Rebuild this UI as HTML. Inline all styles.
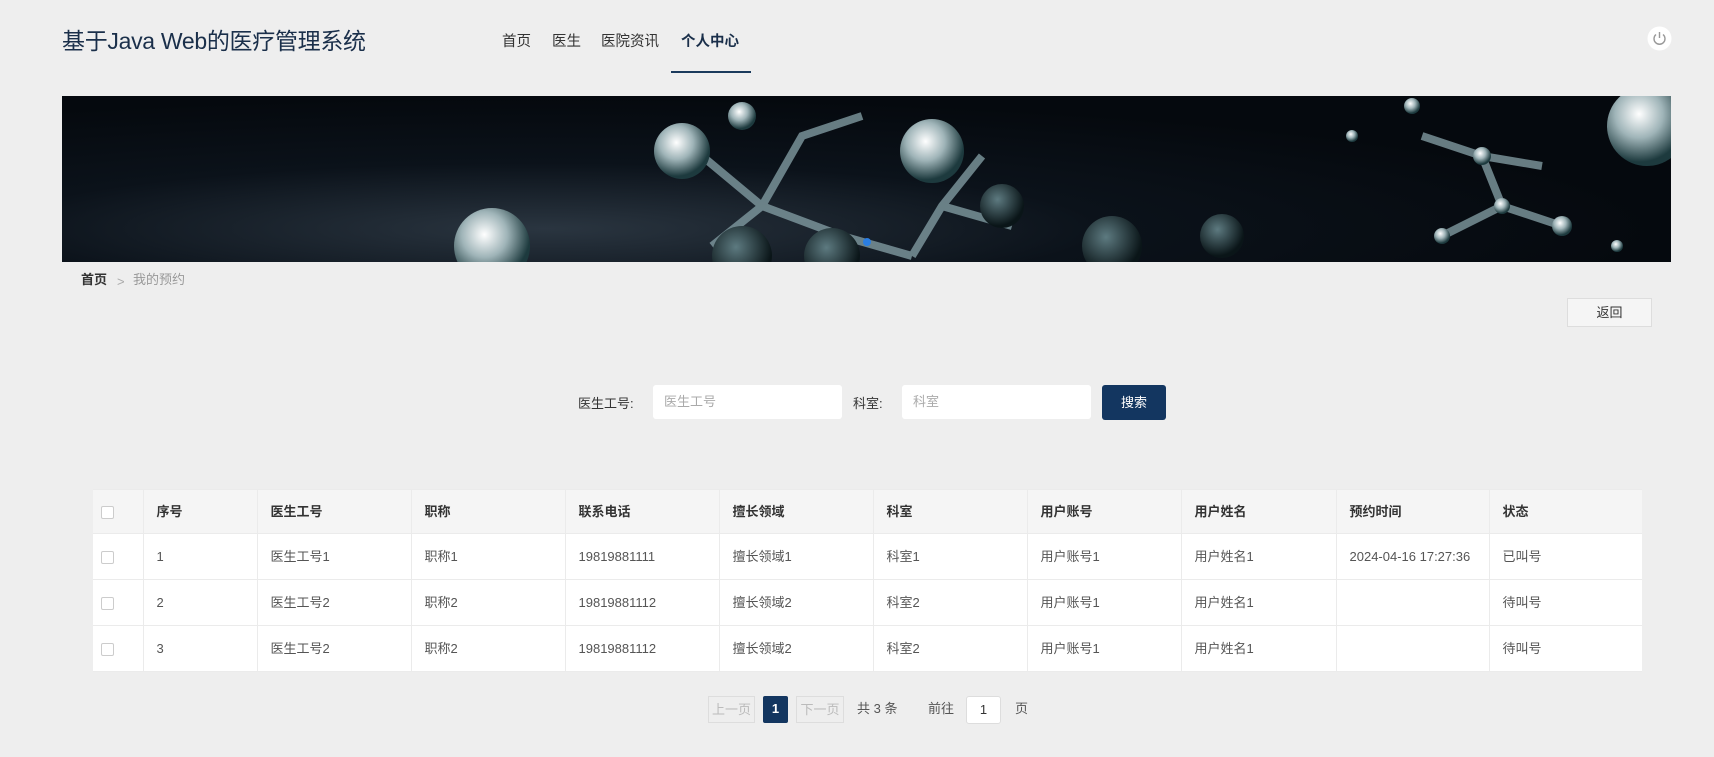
<!DOCTYPE html>
<html><head><meta charset="utf-8"><style>
*{margin:0;padding:0;box-sizing:border-box}
body{width:1714px;height:757px;background:#eeeeee;font-family:"Liberation Sans","Noto Sans CJK SC",sans-serif;position:relative;overflow:hidden;color:#333}
.a{position:absolute}
.title{left:62px;top:22px;font-size:23px;color:#1a2f4a;white-space:nowrap;letter-spacing:-0.3px}
.nav{top:30px;font-size:14.5px;color:#333;white-space:nowrap}
.banner{left:62px;top:96px;width:1609px;height:166px;overflow:hidden;background:radial-gradient(ellipse at 30% 80%,#2a3540 0%,#0b121a 35%,#05090e 70%),#05090e}
.crumb{top:271px;font-size:13px;line-height:17px}
.btn{background:#f5f5f5;border:1px solid #ddd;font-size:13px;text-align:center;color:#333}
.inp{background:#fff;border-radius:3px;font-size:13px;color:#aaa;padding-left:11px;line-height:34px}
table{position:absolute;left:93px;top:489px;width:1549px;border-collapse:collapse;font-size:13px;color:#555}
td,th{border:1px solid #ebebeb;text-align:left;padding-left:13px;font-weight:normal;line-height:16px;vertical-align:middle}
th{background:#f5f5f5;height:44px;color:#333;font-weight:bold}
td{background:#fff;height:46px}
table tr>*:first-child{padding-left:8px;border-left:none}
table tr>*:last-child{border-right:none}
.cb{display:inline-block;width:13px;height:13px;border:1px solid #ccc;border-radius:2px;background:#fff;vertical-align:middle}
.pg{top:696px;height:27px;font-size:13px;line-height:25px;text-align:center}
</style></head><body>
<div class="a title">基于Java Web的医疗管理系统</div>
<div class="a nav" style="left:502px">首页</div>
<div class="a nav" style="left:552px">医生</div>
<div class="a nav" style="left:601px">医院资讯</div>
<div class="a nav" style="left:681px;font-weight:bold;color:#1a2f4a">个人中心</div>
<div class="a" style="left:671px;top:71px;width:80px;height:2px;background:#1a3a5c"></div>
<svg class="a" style="left:1647px;top:26px" width="25" height="25" viewBox="0 0 25 25"><circle cx="12.5" cy="12.5" r="12" fill="#fff"/><path d="M9 8.5a5.5 5.5 0 1 0 7 0" fill="none" stroke="#999" stroke-width="1.4"/><path d="M12.5 6v6" stroke="#999" stroke-width="1.4"/></svg>
<div class="a banner">
<svg width="1609" height="166" viewBox="0 0 1609 166">
<defs><radialGradient id="g" cx="0.4" cy="0.35" r="0.6"><stop offset="0" stop-color="#fff"/><stop offset="0.5" stop-color="#9fb4b8"/><stop offset="1" stop-color="#1d3a3e"/></radialGradient>
<radialGradient id="d" cx="0.4" cy="0.35" r="0.6"><stop offset="0" stop-color="#5d7a80"/><stop offset="1" stop-color="#0a1518"/></radialGradient></defs>
<g stroke="#7f9aa0" stroke-width="8" fill="none" opacity="0.8">
<path d="M640 60 L700 110 L780 140 M700 110 L650 150 M700 110 L740 40 L800 20 M780 140 L850 160 M850 160 L880 110 L920 60 M880 110 L950 130"/>
<path d="M1360 40 L1420 60 L1480 70 M1420 60 L1440 110 L1500 130 M1440 110 L1380 140"/>
</g>
<circle cx="620" cy="55" r="28" fill="url(#g)"/>
<circle cx="870" cy="55" r="32" fill="url(#g)"/>
<circle cx="430" cy="150" r="38" fill="url(#g)"/>
<circle cx="680" cy="160" r="30" fill="url(#d)"/>
<circle cx="770" cy="160" r="28" fill="url(#d)"/>
<circle cx="940" cy="110" r="22" fill="url(#d)"/>
<circle cx="680" cy="20" r="14" fill="url(#g)"/>
<circle cx="1050" cy="150" r="30" fill="url(#d)"/>
<circle cx="1160" cy="140" r="22" fill="url(#d)"/>
<circle cx="1585" cy="30" r="40" fill="url(#g)"/>
<circle cx="1420" cy="60" r="9" fill="url(#g)"/>
<circle cx="1500" cy="130" r="10" fill="url(#g)"/>
<circle cx="1440" cy="110" r="8" fill="url(#g)"/>
<circle cx="1380" cy="140" r="8" fill="url(#g)"/>
<circle cx="1350" cy="10" r="8" fill="url(#g)"/>
<circle cx="1290" cy="40" r="6" fill="url(#g)"/>
<circle cx="1555" cy="150" r="6" fill="url(#g)"/>
<circle cx="805" cy="146" r="4" fill="#2a7de1"/>
</svg></div>
<div class="a crumb" style="left:81px;font-weight:bold;color:#333">首页</div>
<div class="a crumb" style="left:117px;color:#aaa;top:273px">&gt;</div>
<div class="a crumb" style="left:133px;color:#999">我的预约</div>
<div class="a btn" style="left:1567px;top:298px;width:85px;height:29px;line-height:27px">返回</div>
<div class="a" style="left:578px;top:393px;font-size:13px">医生工号:</div>
<div class="a inp" style="left:653px;top:385px;width:189px;height:34px">医生工号</div>
<div class="a" style="left:853px;top:393px;font-size:13px">科室:</div>
<div class="a inp" style="left:902px;top:385px;width:189px;height:34px">科室</div>
<div class="a" style="left:1102px;top:385px;width:64px;height:35px;background:#133660;border-radius:3px;color:#fff;font-size:13px;text-align:center;line-height:35px">搜索</div>
<table>
<colgroup><col style="width:50px"><col style="width:114px"><col style="width:154px"><col style="width:154px"><col style="width:154px"><col style="width:154px"><col style="width:154px"><col style="width:154px"><col style="width:155px"><col style="width:153px"><col></colgroup>
<tr><th><span class="cb"></span></th><th>序号</th><th>医生工号</th><th>职称</th><th>联系电话</th><th>擅长领域</th><th>科室</th><th>用户账号</th><th>用户姓名</th><th>预约时间</th><th>状态</th></tr>
<tr><td><span class="cb"></span></td><td>1</td><td>医生工号1</td><td>职称1</td><td>19819881111</td><td>擅长领域1</td><td>科室1</td><td>用户账号1</td><td>用户姓名1</td><td>2024-04-16 17:27:36</td><td>已叫号</td></tr>
<tr><td><span class="cb"></span></td><td>2</td><td>医生工号2</td><td>职称2</td><td>19819881112</td><td>擅长领域2</td><td>科室2</td><td>用户账号1</td><td>用户姓名1</td><td></td><td>待叫号</td></tr>
<tr><td><span class="cb"></span></td><td>3</td><td>医生工号2</td><td>职称2</td><td>19819881112</td><td>擅长领域2</td><td>科室2</td><td>用户账号1</td><td>用户姓名1</td><td></td><td>待叫号</td></tr>
</table>
<div class="a pg" style="left:708px;width:47px;border:1px solid #ddd;color:#bbb">上一页</div>
<div class="a pg" style="left:763px;width:25px;background:#133660;color:#fff;font-weight:bold;border-radius:2px">1</div>
<div class="a pg" style="left:796px;width:48px;border:1px solid #ddd;color:#bbb">下一页</div>
<div class="a pg" style="left:857px;color:#555">共 3 条</div>
<div class="a pg" style="left:928px;color:#555">前往</div>
<div class="a pg" style="left:966px;width:35px;height:28px;background:#fff;border:1px solid #ddd;border-radius:3px;color:#333">1</div>
<div class="a pg" style="left:1015px;color:#555">页</div>
</body></html>
